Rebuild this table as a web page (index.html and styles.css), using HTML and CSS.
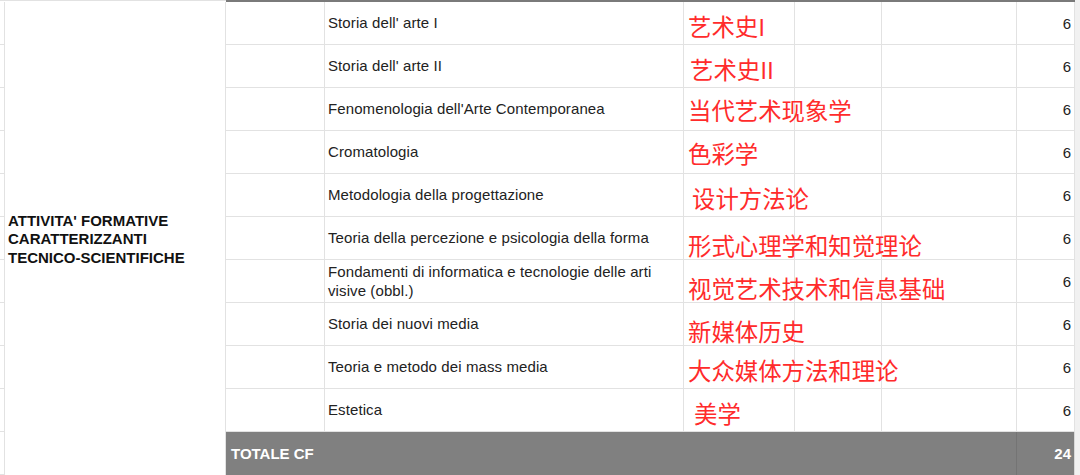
FILE: index.html
```html
<!DOCTYPE html>
<html lang="it">
<head>
<meta charset="utf-8">
<title>Piano di studi</title>
<link rel="stylesheet" href="styles.css">
</head>
<body>
<div class="sheet">
  <div class="top-left"></div>
  <div class="top-bar"></div>
  <div class="gutter-right"></div>

  <div class="group">ATTIVITA' FORMATIVE<br>CARATTERIZZANTI<br>TECNICO-SCIENTIFICHE</div>

  <div class="c0"></div><div class="c"></div><div class="c name">Storia dell' arte I</div><div class="c zh z1">艺术史I</div><div class="c"></div><div class="c"></div><div class="c num">6</div>
  <div class="c0"></div><div class="c"></div><div class="c name">Storia dell' arte II</div><div class="c zh z2">艺术史II</div><div class="c"></div><div class="c"></div><div class="c num">6</div>
  <div class="c0"></div><div class="c"></div><div class="c name">Fenomenologia dell'Arte Contemporanea</div><div class="c zh zc">当代艺术现象学</div><div class="c"></div><div class="c"></div><div class="c num">6</div>
  <div class="c0"></div><div class="c"></div><div class="c name">Cromatologia</div><div class="c zh zc">色彩学</div><div class="c"></div><div class="c"></div><div class="c num">6</div>
  <div class="c0"></div><div class="c"></div><div class="c name">Metodologia della progettazione</div><div class="c zh z2 z3">设计方法论</div><div class="c"></div><div class="c"></div><div class="c num">6</div>
  <div class="c0"></div><div class="c"></div><div class="c name">Teoria della percezione e psicologia della forma</div><div class="c zh">形式心理学和知觉理论</div><div class="c"></div><div class="c"></div><div class="c num">6</div>
  <div class="c0"></div><div class="c"></div><div class="c name">Fondamenti di informatica e tecnologie delle arti visive (obbl.)</div><div class="c zh">视觉艺术技术和信息基础</div><div class="c"></div><div class="c"></div><div class="c num">6</div>
  <div class="c0"></div><div class="c"></div><div class="c name">Storia dei nuovi media</div><div class="c zh">新媒体历史</div><div class="c"></div><div class="c"></div><div class="c num">6</div>
  <div class="c0"></div><div class="c"></div><div class="c name">Teoria e metodo dei mass media</div><div class="c zh z1">大众媒体方法和理论</div><div class="c"></div><div class="c"></div><div class="c num">6</div>
  <div class="c0"></div><div class="c"></div><div class="c name">Estetica</div><div class="c zh z1 z4">美学</div><div class="c"></div><div class="c"></div><div class="c num">6</div>

  <div class="c0"></div><div class="total-label">TOTALE CF</div><div class="total-num">24</div>
</div>
</body>
</html>
```
FILE: styles.css
```css
html, body {
  margin: 0;
  padding: 0;
  background: #ffffff;
  overflow: hidden;
}

.sheet {
  display: grid;
  grid-template-columns: 5px 221px 99px 359px 111px 87px 135px 58px 1fr;
  grid-template-rows: 2px repeat(11, 43px);
  width: 1080px;
  height: 475px;
  overflow: hidden;
  font-family: "Liberation Sans", Arial, sans-serif;
  font-size: 15px;
  color: #222222;
  background: #ffffff;
}

.top-left {
  grid-column: 1 / 3;
  grid-row: 1;
  border-top: 1px solid #e2e2e2;
}

.top-bar {
  grid-column: 3 / 9;
  grid-row: 1;
  background: #7a7a7a;
}

.gutter-right {
  grid-column: 9;
  grid-row: 1 / -1;
  background: #f1f1f1;
}

.group {
  grid-column: 2;
  grid-row: 2 / span 11;
  box-sizing: border-box;
  border-right: 1px solid #e2e2e2;
  display: flex;
  align-items: center;
  padding-left: 3px;
  padding-top: 2px;
  font-weight: bold;
  font-size: 15px;
  line-height: 18.5px;
  color: #111111;
}

.c0 {
  grid-column: 1;
  box-sizing: border-box;
  border-right: 1px solid #e2e2e2;
  border-bottom: 1px solid #e2e2e2;
}

.c {
  box-sizing: border-box;
  border-right: 1px solid #e2e2e2;
  border-bottom: 1px solid #e2e2e2;
  display: flex;
  align-items: center;
  min-width: 0;
}

.name {
  padding: 1px 4px 0 3px;
  line-height: 18.5px;
  letter-spacing: 0.1px;
}

.zh {
  font-family: "Noto Sans CJK SC", "Liberation Sans", sans-serif;
  font-size: 23.4px;
  color: #ff2b2b;
  white-space: nowrap;
  overflow: visible;
  padding-left: 4px;
  padding-top: 13px;
  line-height: 28px;
  position: relative;
  z-index: 1;
}

.z1 {
  padding-top: 6px;
}

.z2 {
  padding-top: 6px;
  padding-left: 6px;
}

.zc {
  padding-top: 1px;
}

.z3 {
  padding-left: 8px;
}

.z4 {
  padding-left: 10px;
}

.num {
  justify-content: flex-end;
  padding-right: 3px;
}

.total-label {
  grid-column: 3 / 8;
  box-sizing: border-box;
  background: #808080;
  border-right: 1px solid #747474;
  display: flex;
  align-items: center;
  padding-left: 5px;
  color: #ffffff;
  font-weight: bold;
}

.total-num {
  grid-column: 8;
  box-sizing: border-box;
  background: #808080;
  border-right: 1px solid #d8d8d8;
  display: flex;
  align-items: center;
  justify-content: flex-end;
  padding-right: 3px;
  color: #ffffff;
  font-weight: bold;
}
```
